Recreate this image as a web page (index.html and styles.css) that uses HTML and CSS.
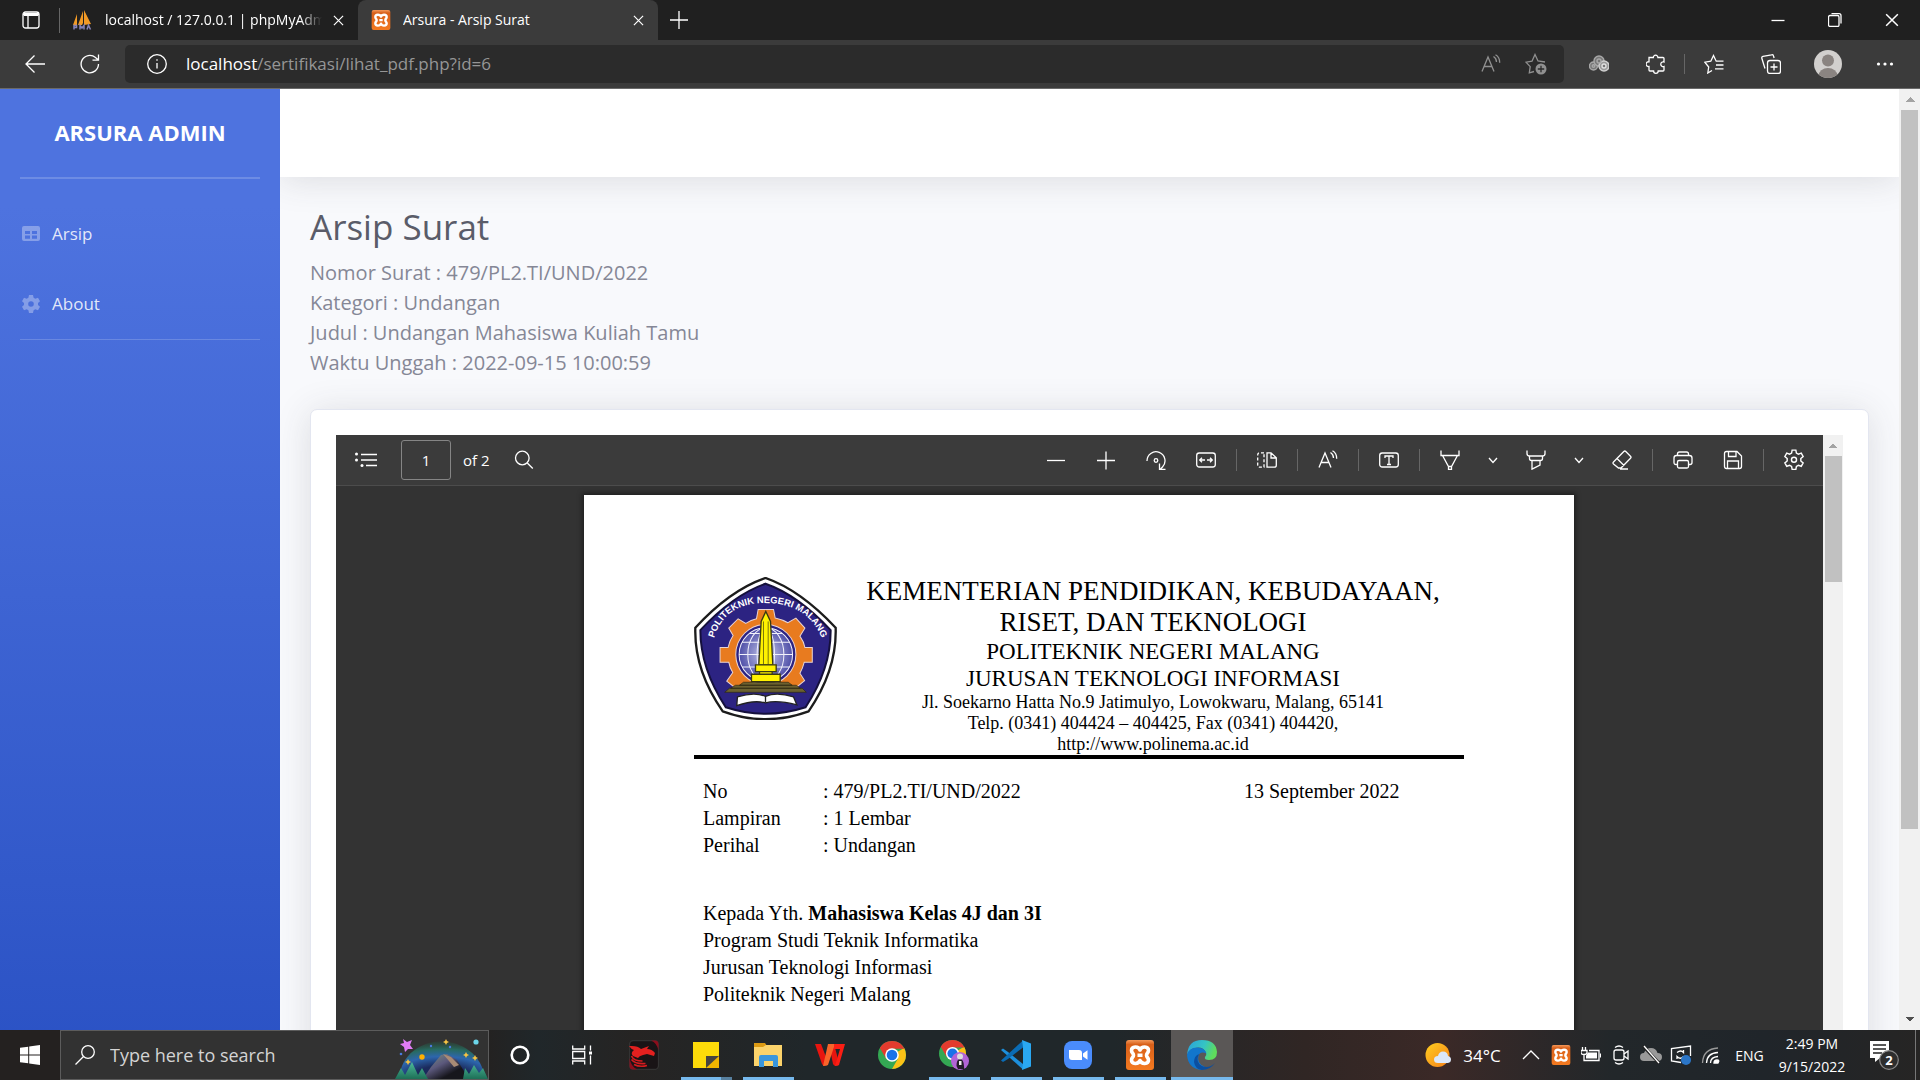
FILE: index.html
```html
<!DOCTYPE html>
<html lang="id">
<head>
<meta charset="utf-8">
<meta name="viewport" content="width=device-width, initial-scale=1">
<title>Arsura - Arsip Surat</title>
<link rel="stylesheet" href="styles.css">
</head>
<body>
<svg class="defs" aria-hidden="true">
  <defs>
    <linearGradient id="xg" x1="0" y1="0" x2="0" y2="1"><stop offset="0" stop-color="#f49a5c"/><stop offset=".15" stop-color="#d8601a"/><stop offset="1" stop-color="#f47a20"/></linearGradient>
    <symbol id="xampp" viewBox="0 0 30 30">
      <rect x="1" y="0" width="28" height="30" rx="3" fill="url(#xg)"/>
      <path d="M15 10C13.500 6 6.500 6 6.500 10.500C6.500 13 8.500 13 8.500 15.200S6.500 17.500 6.500 20C6.500 24.500 13.500 24.500 15 20.500C16.500 24.500 23.500 24.500 23.500 20C23.500 17.500 21.500 17.500 21.500 15.200S23.500 13 23.500 10.500C23.500 6 16.500 6 15 10ZM12.500 15.200h5" fill="none" stroke="#fff" stroke-width="3.600" stroke-linejoin="round"/>
    </symbol>
    <symbol id="chrome" viewBox="0 0 28 28">
      <circle cx="14" cy="14" r="14" fill="#34a853"/>
      <path d="M14 14 26.120 7A14 14 0 0 1 14 28L20 17.500Z" fill="#fbc116"/>
      <path d="M14 7.700H26.500A14 14 0 0 0 1.880 7L8 17.500Z" fill="#e33b2e"/>
      <circle cx="14" cy="14" r="6.800" fill="#fff"/><circle cx="14" cy="14" r="5.300" fill="#1a73e8"/>
    </symbol>
    <symbol id="readaloud" viewBox="0 0 20 20">
      <path d="M1 17.500 7 3l6 14.500M3 12.500h8M12.500 2.500c2 1.300 3 3.300 3 5.500M14.500.800c2.800 1.600 4.300 4.500 4.200 8"/>
    </symbol>
    <symbol id="chev" viewBox="0 0 12 12"><path d="m2 4 4 4.500L10 4"/></symbol>
    <symbol id="x" viewBox="0 0 12 12"><path d="m1 1 10 10M11 1 1 11"/></symbol>
  </defs>
</svg>

<header class="browser">
  <div class="tabs">
    <button class="icon-btn workspaces" aria-label="Tab actions"><svg class="i18" viewBox="0 0 18 18"><rect x="1" y="1" width="16" height="16" rx="2.500"/><path d="M1 3.500h16M6 5v12"/><path d="M2 2h14v3H2Z" class="fill" stroke="none"/></svg></button>
    <div class="tab">
      <svg class="fav plain" viewBox="0 0 20 20"><path d="M0 15 4 4v11ZM5 15 10 1v12l-1 2ZM11 15V0l7 14Z" fill="#f29a26"/><path d="M1 19.500V15.500h2.500v2H1M7 19.500v-4l2 2.500 2-2.500v4M14 19.500l1.500-4.200 2 4.200" fill="none" stroke="#8583b8" stroke-width="1.500"/></svg>
      <span class="tab-title fade">localhost / 127.0.0.1 | phpMyAdmin</span>
      <button class="icon-btn close" aria-label="Close tab"><svg class="i11"><use href="#x"/></svg></button>
    </div>
    <div class="tab active">
      <svg class="fav plain"><use href="#xampp"/></svg>
      <span class="tab-title">Arsura - Arsip Surat</span>
      <button class="icon-btn close" aria-label="Close tab"><svg class="i11"><use href="#x"/></svg></button>
    </div>
    <button class="icon-btn newtab" aria-label="New tab"><svg class="i18" viewBox="0 0 18 18"><path d="M9 0v18M0 9h18"/></svg></button>
    <div class="win">
      <button class="icon-btn" aria-label="Minimize"><svg class="i14" viewBox="0 0 14 14"><path d="M.500 7.500h13"/></svg></button>
      <button class="icon-btn" aria-label="Restore"><svg class="i14" viewBox="0 0 14 14"><rect x=".500" y="2.500" width="10.500" height="11" rx="1.500"/><path d="M3.500.700h7.500q2 0 2 2v7.800"/></svg></button>
      <button class="icon-btn" aria-label="Close"><svg class="i14" viewBox="0 0 12 12"><use href="#x"/></svg></button>
    </div>
  </div>
  <div class="toolbar">
    <button class="icon-btn nav" aria-label="Back"><svg class="i20" viewBox="0 0 20 20"><path d="M20 10H1M9.500 1.500 1 10l8.500 8.500"/></svg></button>
    <button class="icon-btn nav reload" aria-label="Refresh"><svg class="i20" viewBox="0 0 20 20"><path d="M18.500 10a8.700 8.700 0 1 1-3-6.500L18 5.800M18.500.500v5.700h-6"/></svg></button>
    <div class="address">
      <svg class="i20 info" viewBox="0 0 20 20"><circle cx="10" cy="10" r="9.300"/><path d="M10 9v5.500M10 5.200v1.600"/></svg>
      <div class="url"><b>localhost</b>/sertifikasi/lihat_pdf.php?id=6</div>
      <button class="icon-btn dim" aria-label="Read aloud"><svg class="i20"><use href="#readaloud"/></svg></button>
      <button class="icon-btn dim" aria-label="Add to favorites"><svg class="i22" viewBox="0 0 22 22"><path d="M9 18.500 4.300 19.800l.900-6.200L1 9.200l6-1L10 1.500l3 6.500 7 1"/><circle cx="16" cy="16" r="5.500" class="fill" stroke="none"/><path d="M16 12.800v6.400M12.800 16h6.400" stroke="#2b2b2b"/></svg></button>
    </div>
    <div class="tools">
      <button class="icon-btn" aria-label="Extension"><svg class="i20 plain" viewBox="0 0 20 20"><g stroke="#a8a8a8" stroke-width="1.400" fill="#777"><circle cx="4.500" cy="12" r="4"/><circle cx="10" cy="7" r="5"/><circle cx="15" cy="12" r="5" fill="#999" stroke="#d0d0d0"/><circle cx="4.500" cy="12" r="1.300"/><circle cx="10" cy="7" r="2"/><circle cx="15" cy="12" r="2" stroke="#e0e0e0"/></g></svg></button>
      <button class="icon-btn" aria-label="Extensions"><svg class="i20" viewBox="0 0 20 20"><path d="M3 3.500h4.300a2.300 2.300 0 1 1 4.600 0H17a1 1 0 0 1 1 1V8a2.400 2.400 0 1 0 0 4.500v3.500a1 1 0 0 1-1 1h-4.800a2.300 2.300 0 1 1-4.600 0H4a1 1 0 0 1-1-1v-3.500a2.400 2.400 0 1 1 0-4.700Z"/></svg></button>
      <span class="sep"></span>
      <button class="icon-btn" aria-label="Favorites"><svg class="i20" viewBox="0 0 20 20"><path d="M8 16.500 3.800 19l.900-6L.800 8.200l6-1L9.500 1.500l2.700 5.700h7.300M12 11h7.500M11 14.800h8.500"/></svg></button>
      <button class="icon-btn" aria-label="Collections"><svg class="i20" viewBox="0 0 20 20"><rect x="6.500" y="6.500" width="13" height="13" rx="2.500"/><path d="M13 9.500v7M9.500 13h7M4 14.500 .900 4.500q-.500-1.700 1-2.100L10.500.800q1.600-.400 2 1.200l.600 2"/></svg></button>
      <button class="icon-btn" aria-label="Profile"><svg class="i28 plain" viewBox="0 0 28 28"><defs><clipPath id="av"><circle cx="14" cy="14" r="14"/></clipPath></defs><g clip-path="url(#av)"><rect width="28" height="28" fill="#d2d0ce"/><circle cx="14" cy="10.500" r="6" fill="#8a8481"/><ellipse cx="14" cy="26" rx="9.500" ry="8" fill="#8a8481"/></g></svg></button>
      <button class="icon-btn" aria-label="Settings and more"><svg class="i18 plain" viewBox="0 0 18 18"><g fill="#fff"><circle cx="2.500" cy="9" r="1.600"/><circle cx="9" cy="9" r="1.600"/><circle cx="15.500" cy="9" r="1.600"/></g></svg></button>
    </div>
  </div>
</header>

<div class="page">
  <nav class="sidebar">
    <a class="brand" href="#">ARSURA ADMIN</a>
    <hr class="thick">
    <a class="nav-link" href="#"><svg viewBox="0 0 18 18"><path fill-rule="evenodd" d="M2 1h14q2 0 2 2v11q0 2-2 2H2q-2 0-2-2V3q0-2 2-2Zm1 5v3h5V6Zm7 0v3h5V6ZM3 10.500v3.300h5v-3.300Zm7 0v3.300h5v-3.300Z"/></svg><span>Arsip</span></a>
    <a class="nav-link" href="#"><svg viewBox="0 0 18 18"><path fill-rule="evenodd" d="M7 0h4l.600 2.700 1.700 1 2.700-.900 2 3.400L16 8v2l2 1.800-2 3.400-2.700-.900-1.700 1L11 18H7l-.600-2.700-1.700-1-2.700.900-2-3.400L2 10V8L0 6.200l2-3.400 2.700.900 1.700-1ZM9 6.200a2.800 2.800 0 1 0 0 5.600 2.800 2.800 0 0 0 0-5.600Z"/></svg><span>About</span></a>
    <hr>
  </nav>

  <main class="main">
    <div class="topbar"></div>
    <div class="content">
      <h1>Arsip Surat</h1>
      <p class="info-lines">Nomor Surat : 479/PL2.TI/UND/2022<br>Kategori : Undangan<br>Judul : Undangan Mahasiswa Kuliah Tamu<br>Waktu Unggah : 2022-09-15 10:00:59</p>
      <section class="card">
        <div class="viewer">
          <div class="pdf">
            <div class="pdf-bar">
              <button class="icon-btn toc" aria-label="Table of contents"><svg class="i22" viewBox="0 0 22 18"><path d="M6 3.500h16M6 9h16M11 14.500h11"/><g class="fill" stroke="none"><circle cx="1.500" cy="3" r="1.500"/><circle cx="1.500" cy="9" r="1.500"/><circle cx="7" cy="14.500" r="1.500"/></g></svg></button>
              <input class="page-no" type="text" value="1" aria-label="Page number">
              <span class="of">of 2</span>
              <button class="icon-btn" aria-label="Search"><svg class="i20" viewBox="0 0 20 20"><circle cx="8.300" cy="8" r="6.800"/><path d="m13.300 13 5.500 5.500"/></svg></button>
              <div class="pdf-tools">
                <button class="icon-btn" aria-label="Zoom out"><svg class="i20" viewBox="0 0 20 20"><path d="M1 10.500h18"/></svg></button>
                <button class="icon-btn" aria-label="Zoom in"><svg class="i20" viewBox="0 0 20 20"><path d="M1 10.500h18M10 1.500v18"/></svg></button>
                <button class="icon-btn" aria-label="Rotate"><svg class="i20" viewBox="0 0 20 20"><path d="M1 11a9 9 0 1 1 15.500 6l-2 2M13.500 13.500v6h6"/><circle cx="10" cy="10.500" r="1.800"/></svg></button>
                <button class="icon-btn" aria-label="Fit to width"><svg class="i20" viewBox="0 0 20 20"><rect x=".700" y="3" width="18.600" height="14" rx="2.500"/><path d="M9 10H4M6 7.700 3.700 10 6 12.300M11 10h5M14 7.700l2.300 2.300-2.300 2.300"/></svg></button>
                <span class="sep"></span>
                <button class="icon-btn" aria-label="Page view"><svg class="i20" viewBox="0 0 20 20"><path d="M10 2.800h4l5.300 5v7.400q0 2-2 2H10ZM14 3v5h5"/><path d="M7 2.800H3q-2.300 0-2.300 2.300v9.800q0 2.300 2.300 2.300h4V2.800" stroke-dasharray="3 2"/></svg></button>
                <span class="sep"></span>
                <button class="icon-btn" aria-label="Read aloud"><svg class="i20"><use href="#readaloud"/></svg></button>
                <span class="sep"></span>
                <button class="icon-btn" aria-label="Add text"><svg class="i20" viewBox="0 0 20 20"><rect x=".700" y="3" width="18.600" height="14" rx="2.500"/><path d="M6 8V6h8v2M10 6v8.500M8 14.500h4"/></svg></button>
                <span class="sep"></span>
                <button class="icon-btn" aria-label="Draw"><svg class="i20" viewBox="0 0 20 20"><path d="M1 .500V5.500h18V.500M2.500 5.500l6 11h3l6-11M8.500 16v3.300h3V16"/></svg></button>
                <button class="icon-btn narrow" aria-label="Draw options"><svg class="i12"><use href="#chev"/></svg></button>
                <button class="icon-btn" aria-label="Highlight"><svg class="i20" viewBox="0 0 20 20"><path d="M1 .500v3q0 2.500 2.500 2.500h13Q19 6 19 3.500v-3M3.500 6v2.500q0 2 2 2h9q2 0 2-2V6M6 10.500v8.700l8-4v-4.700"/></svg></button>
                <button class="icon-btn narrow" aria-label="Highlight options"><svg class="i12"><use href="#chev"/></svg></button>
                <button class="icon-btn" aria-label="Erase"><svg class="i20" viewBox="0 0 20 20"><path d="M1.500 12 11.800 1.500q1-1 2 0l4.700 4.700q1 1 0 2L9 18H6.500l-5-4q-1-1 0-2ZM5 8.500l7 7M8 19h8"/></svg></button>
                <span class="sep"></span>
                <button class="icon-btn" aria-label="Print"><svg class="i20" viewBox="0 0 20 20"><path d="M4.500 14.500H3q-2 0-2-2V8q0-2.500 2.500-2.500h13Q19 5.500 19 8v4.500q0 2-2 2h-1.500M4.500 5.500V4q0-2 2-2h7q2 0 2 2v1.500"/><rect x="4.500" y="10.500" width="11" height="7.500" rx="1.500"/></svg></button>
                <button class="icon-btn" aria-label="Save"><svg class="i20" viewBox="0 0 20 20"><path d="M3.500 1.500H14L18.500 6v10.500q0 2-2 2h-13q-2 0-2-2v-13q0-2 2-2ZM5.500 1.500v5h7.500v-5M4.500 18.500V11h11v7.500"/></svg></button>
                <span class="sep"></span>
                <button class="icon-btn" aria-label="Settings"><svg class="i22" viewBox="0 0 20 20"><path d="M8.300 1h3.400l.500 2.700 1.800 1 2.600-.900 1.700 3L16.200 8.600v2.300l2.100 1.800-1.700 3-2.600-.900-1.800 1-.500 2.700H8.300l-.500-2.700-1.800-1-2.600.900-1.700-3 2.100-1.800V8.600L1.700 6.800l1.700-3 2.600.900 1.800-1Z"/><circle cx="10" cy="9.800" r="2.300"/></svg></button>
              </div>
            </div>
            <div class="canvas">
              <article class="sheet">
                <header class="letterhead">
                  <svg class="crest" viewBox="42 51 428 428" role="img" aria-label="Politeknik Negeri Malang">
                    <defs>
                      <path id="arc" d="M98 250C120 150 190 127 262 129S402 160 430 250"/>
                      <radialGradient id="globe"><stop offset="0" stop-color="#c9cdec"/><stop offset="1" stop-color="#4f4fa8"/></radialGradient>
                    </defs>
                    <path d="M256 54 Q360 90 466 203 Q470 330 385 453 Q256 500 128 453 Q42 330 46 203 Q150 90 256 54Z" fill="#fff" stroke="#1c1c1c" stroke-width="7"/>
                    <path d="M256 71 Q352 104 451 210 Q452 325 376 441 Q256 480 137 441 Q61 325 61 210 Q160 104 256 71Z" fill="#2c2382" stroke="#15103c" stroke-width="6"/>
                    <g fill="#e87b1f" stroke="#e8d4d4" stroke-width="3">
                      <path d="M234 148h46l5 26q22 5 38 14l24-14 27 30-15 24q12 17 15 34h22v44h-24q-4 17-13 33l14 22-27 22H166l-26-20 18-26q-9-14-12-31h-26v-44h24q4-20 15-36l-13-22 28-28 23 14q16-10 32-14Z"/>
                    </g>
                    <circle cx="257" cy="283" r="90" fill="#2c2382" stroke="#e8d4d4" stroke-width="3"/>
                    <circle cx="257" cy="283" r="80" fill="url(#globe)"/>
                    <g fill="none" stroke="#f2f2fb" stroke-width="3"><circle cx="257" cy="283" r="80"/><ellipse cx="257" cy="283" rx="54" ry="80"/><ellipse cx="257" cy="283" rx="26" ry="80"/><path d="M177 283h160M186 246h142M186 320h142M208 220h98"/></g>
                    <g fill="#fff200" stroke="#3b3a12" stroke-width="4"><path d="M257 154l14 30 7 130h-42l7-130Z"/><path d="M250 184v130M264 184v130" stroke-width="2"/><path d="M226 314h62v20h-62ZM214 342h86v22h-86ZM238 334h38v8h-38Z"/></g>
                    <path d="M190 366h134l12 9H178ZM166 375h182l12 9H152ZM148 384h218l12 12H134Z" fill="#6b6130" stroke="#2c2710" stroke-width="2"/>
                    <path d="M172 410q50-16 84-2q34-14 84 2l10 24q-60-16-94-6-34-10-86 8Z" fill="#fff" stroke="#222" stroke-width="4"/><path d="M256 408v18" stroke="#222" stroke-width="4"/>
                    <text class="crest-text"><textPath href="#arc" startOffset="50%">POLITEKNIK NEGERI MALANG</textPath></text>
                  </svg>
                  <div class="org">
                    <p class="l1">KEMENTERIAN PENDIDIKAN, KEBUDAYAAN,<br>RISET, DAN TEKNOLOGI</p>
                    <p class="l2">POLITEKNIK NEGERI MALANG<br>JURUSAN TEKNOLOGI INFORMASI</p>
                    <p class="l3">Jl. Soekarno Hatta No.9 Jatimulyo, Lowokwaru, Malang, 65141<br>Telp. (0341) 404424 – 404425, Fax (0341) 404420,<br>http://www.polinema.ac.id</p>
                  </div>
                </header>
                <div class="meta">
                  <table>
                    <tr><th scope="row">No</th><td>: 479/PL2.TI/UND/2022</td></tr>
                    <tr><th scope="row">Lampiran</th><td>: 1 Lembar</td></tr>
                    <tr><th scope="row">Perihal</th><td>: Undangan</td></tr>
                  </table>
                  <time datetime="2022-09-13">13 September 2022</time>
                </div>
                <p class="to">Kepada Yth. <b>Mahasiswa Kelas 4J dan 3I</b><br>Program Studi Teknik Informatika<br>Jurusan Teknologi Informasi<br>Politeknik Negeri Malang</p>
              </article>
            </div>
          </div>
          <div class="scroll inner"><span class="arrow up"></span><span class="thumb"></span></div>
        </div>
      </section>
    </div>
  </main>
  <div class="scroll outer"><span class="arrow up"></span><span class="thumb"></span><span class="arrow down"></span></div>
</div>

<footer class="taskbar">
  <button class="start" aria-label="Start"><svg class="i20 plain" viewBox="0 0 20 20"><path d="M0 2.800 8.200 1.700v7.800H0ZM9.200 1.500 20 0v9.500H9.200ZM0 10.500h8.200v7.800L0 17.200ZM9.200 10.500H20V20L9.200 18.500Z" fill="#fff"/></svg></button>
  <div class="search">
    <svg class="i20" viewBox="0 0 20 20"><circle cx="13" cy="7" r="6.300"/><path d="M8.500 11.500.500 19.500"/></svg>
    <input type="text" placeholder="Type here to search" aria-label="Search">
    <svg class="art plain" viewBox="0 0 93 42">
      <defs>
        <radialGradient id="aur" cx=".5" cy="1" r="1"><stop offset=".35" stop-color="#1b2a5c"/><stop offset=".6" stop-color="#2d66ad"/><stop offset=".8" stop-color="#276a60"/><stop offset="1" stop-color="#27533f" stop-opacity=".3"/></radialGradient>
        <linearGradient id="rock" x1="0" y1="0" x2="1" y2="1"><stop offset="0" stop-color="#7d9a80"/><stop offset=".4" stop-color="#5b587c"/><stop offset=".7" stop-color="#16161c"/></linearGradient>
        <linearGradient id="tree" x1="0" y1="0" x2="0" y2="1"><stop offset="0" stop-color="#4dbb9b"/><stop offset="1" stop-color="#1d6f56"/></linearGradient>
      </defs>
      <path d="M4 42C8-8 84-8 90 42Z" fill="url(#aur)"/>
      <path d="M28 42 36 30 46 18l6-1 10 6 12 19Z" fill="url(#rock)"/><path d="m48 17 8 3 8 8-5 2-5-6Z" fill="#a98b75"/>
      <path d="M0 42 6 31l4 7 7-13 6 13 4-7 6 11ZM68 42l2-11 4 6 5-9 5 8 4-5 5 11Z" fill="url(#tree)"/>
      <path d="m8 2 4 3 5-2-2 5 3 4-5 0-3 3-1-5-4-3 4-1Z" fill="#e27cf5"/>
      <circle cx="81" cy="5" r="2.600" fill="#6cd6ea"/><circle cx="27" cy="20" r="2.700" fill="#ffb000"/>
      <path d="m51 2 1 2 2 1-2 1-1 2-1-2-2-1 2-1ZM71 15l1 2 2 1-2 1-1 2-1-2-2-1 2-1ZM13 22l1 2 2 1-2 1-1 2-1-2-2-1 2-1ZM80 18l1 2 2 1-2 1-1 2-1-2-2-1 2-1Z" fill="#f6c443"/>
      <circle cx="6" cy="17" r="1.300" fill="#4a78e0"/><circle cx="36" cy="9" r="1.200" fill="#4a78e0"/><circle cx="55" cy="10" r="1.200" fill="#4a78e0"/>
    </svg>
  </div>
  <div class="apps">
    <button aria-label="Cortana"><svg class="i20 plain" viewBox="0 0 20 20"><circle cx="10" cy="10" r="8.300" fill="none" stroke="#fff" stroke-width="2.600"/></svg></button>
    <button aria-label="Task view"><svg class="i20" viewBox="0 0 20 20"><path d="M.700.500V4h12V.500M.700 19.500V16h12v3.500M.700 6.500h12v7h-12ZM18.500.500v5M18.500 10.500v9"/><rect x="17" y="6.500" width="3" height="3" class="fill" stroke="none"/></svg></button>
    <button aria-label="Dragon Center"><svg class="i30 plain" viewBox="0 0 30 30"><rect x=".500" y=".500" width="29" height="29" rx="4" fill="#191416" stroke="#333"/><path d="M22 .500h4q3.500 0 3.500 4v6Q28 3 22 .500ZM.500 18v8q0 3.500 4 3.500h4Q2 27 .500 18Z" fill="#8d0d1c"/><path d="M3 6q6 0 9 3l8-3-2 3q5 0 8 4l-1 3-7-2-4 1q-4 1-5 3l-5-2q-3-3 1-6-3-1-5-4Z" fill="#e3201f"/><path d="M2.500 16q2 5 11 5M2.500 19.500q4 5 14 4M5 24.500q6 3 13 1" fill="none" stroke="#d41c1f" stroke-width="1.600"/></svg></button>
    <button class="run more" aria-label="Sticky Notes"><svg class="i28 plain" viewBox="0 0 28 28"><path d="M1 1h26v26H1Z" fill="#fddb09"/><path d="M27 14v13H14Z" fill="#f0b400"/><path d="M14 27V15h13Z" fill="#46443f"/></svg></button>
    <button class="run" aria-label="File Explorer"><svg class="i28 plain" viewBox="0 0 28 28"><path d="M0 2h11l2 3v5H0Z" fill="#dc9a13"/><path d="M0 6h9l3-2h16v21H0Z" fill="#fbd36b"/><path d="M5 26V16q0-2 2-2h15q2 0 2 2v10h-5v-6h-9v6Z" fill="#3a96dc"/></svg></button>
    <button aria-label="WPS Office"><svg class="i30 plain" viewBox="0 0 30 30"><path d="M0 4h6l5 13-1 9q-2 0-3-2Z" fill="#e8150f"/><path d="M14 4h5l4 15-2 7q-2 0-3-2Z" fill="#e8150f"/><path d="M13 4h7l-7 21q-1 1-5 1Z" fill="#f8642a"/><path d="M19 9V4h11l-6 21q-1 1-4 1l5-17Z" fill="#fb1e14"/></svg></button>
    <button aria-label="Chrome"><svg class="i28 plain"><use href="#chrome"/></svg></button>
    <button class="run" aria-label="Chrome profile"><svg class="i30 plain" viewBox="0 0 30 30"><use href="#chrome" width="27" height="27"/><circle cx="21" cy="21" r="9" fill="#b264d6"/><path d="M17.500 26q0-7 3.500-7t4 7-1 3h-5Z" fill="#241c2a"/><circle cx="21" cy="16.500" r="3" fill="#ddd"/><path d="M20 21h2.500v4H20Z" fill="#eee"/></svg></button>
    <button class="run" aria-label="Visual Studio Code"><svg class="i30 plain" viewBox="0 0 30 30"><path d="M0 10 2 8.500l5 3.500 15 12v5.500Z" fill="#1d8fdc"/><path d="M22 .500v7L7 19l-5 3L0 20.500Z" fill="#0a6cb5"/><path d="M21 0l9 3.500v23L21 30l1-6V7Z" fill="#2aa8f2"/></svg></button>
    <button class="run" aria-label="Zoom"><svg class="i28 plain" viewBox="0 0 28 28"><rect width="28" height="28" rx="8" fill="#4a8cfc"/><path d="M5 9h10q3 0 3 3v7H8q-3 0-3-3ZM19 12.500l4.500-3.200v9.400L19 15.500Z" fill="#fff"/></svg></button>
    <button class="run" aria-label="XAMPP"><svg class="i30 plain"><use href="#xampp"/></svg></button>
    <button class="run current" aria-label="Microsoft Edge"><svg class="i30 plain" viewBox="0 0 30 30"><defs><linearGradient id="eg" x1="0" y1="0" x2="1" y2=".3"><stop offset="0" stop-color="#2aa0dc"/><stop offset=".6" stop-color="#35c4c4"/><stop offset="1" stop-color="#5fdc5c"/></linearGradient></defs><path d="M0 15Q1 0 15 0q14 0 15 12 0 8-8 8-5 0-4-3 2-2 1-4-3-7-11-5-6 1-8 7Z" fill="url(#eg)"/><path d="M0 15Q2 7.500 10 7.500q8 0 9.500 6-6-3-8 2-2 8 6 11-2 3.500-4 3.500Q1 28 0 15Z" fill="#1276cc"/><path d="M12 14q-4 8 3 12 7 3 13-3-5 7-13 7-7-1-8-8 0-6 5-8Z" fill="#0c4fa0"/></svg></button>
  </div>
  <div class="tray">
    <button class="weather"><svg class="i26 plain" viewBox="0 0 26 26"><defs><linearGradient id="sun" x1="0" y1="0" x2="1" y2="1"><stop offset="0" stop-color="#ffce1f"/><stop offset="1" stop-color="#f5801a"/></linearGradient></defs><circle cx="12.500" cy="13" r="12" fill="url(#sun)"/><path d="M13 21q-4 0-4-3.500t4-3.500q1-4.500 5-4.500 4.500 0 5 4.500 3 .500 3 3.500t-3 3.500Z" fill="#dbe8fa"/></svg>34°C</button>
    <button aria-label="Show hidden icons"><svg class="i18" viewBox="0 0 18 18"><path d="m1 13 8-8 8 8"/></svg></button>
    <button aria-label="XAMPP control"><svg class="i20 plain"><use href="#xampp"/></svg></button>
    <button aria-label="Battery"><svg class="i20" viewBox="0 0 20 20"><path d="M1.500 2v3M4.500 2v3M0 5.500h6v2q0 2-3 2t-3-2ZM3 9v6.500h15v-10H8"/><path d="M7 7.500h9v6H5v-3Z" class="fill" stroke="none"/><path d="M19.500 8.500v4"/></svg></button>
    <button aria-label="Meet now"><svg class="i20" viewBox="0 0 20 20"><rect x="3" y="5" width="10" height="10" rx="2"/><path d="m13 9 4-3v8l-4-3M4 2.500q4-3 8 0M4 17.500q4 3 8 0"/></svg></button>
    <button aria-label="OneDrive"><svg class="i22 plain" viewBox="0 0 22 22"><path d="M4 17q-4 0-4-4t4-4q2-5 7-5t6.500 5q4.500 0 4.500 4t-4 4Z" fill="#999"/><path d="m3 2 16 17" stroke="#222" stroke-width="3"/><path d="m4 2 15 17" stroke="#fff" stroke-width="1.300"/></svg></button>
    <button aria-label="Windows Update"><svg class="i22" viewBox="0 0 22 22"><path d="M11 18.500 1.500 17V4.500L20.500 2v10M7 8.500q4-3 6.500 0V6M13.500 12.500q-3 3.500-6.500 0V15"/><circle cx="16" cy="16" r="5" fill="#2b76c8" stroke="none"/></svg></button>
    <button aria-label="Network"><svg class="i20" viewBox="0 0 20 20"><path d="M1.500 18Q2 4 17 3" stroke="#999"/><path d="M5.500 18Q6 8 17 7.500M9.500 18q0-6 7.500-6.500"/><path d="M13 18q0-3 3-3t1 3Z" class="fill"/></svg></button>
    <button class="lang">ENG</button>
    <button class="clock"><span>2:49 PM</span><span>9/15/2022</span></button>
    <button class="notify" aria-label="Notifications"><svg class="i30 plain" viewBox="0 0 30 30"><path d="M1 1h19v17h-9l-5 4v-4H1Z" fill="#fff"/><path d="M4 5h13M4 9h13M4 13h9" stroke="#222" stroke-width="1.500"/><circle cx="20" cy="20" r="9.300" fill="#2e2e2e" stroke="#8b8b8b" stroke-width="1.200"/><text class="count" x="20" y="25">2</text></svg></button>
  </div>
</footer>
</body>
</html>
```
FILE: styles.css
```css
* { box-sizing: border-box; }

body {
  margin: 0;
  height: 100vh;
  display: grid;
  grid-template-rows: auto minmax(0, 1fr) auto;
  overflow: hidden;
  font-family: "Open Sans", "Noto Sans", sans-serif;
}

button {
  margin: 0;
  padding: 0;
  border: 0;
  background: none;
  color: inherit;
  font: inherit;
}

a { color: inherit; text-decoration: none; }
p, h1 { margin: 0; }

svg {
  display: block;
  flex: none;
  fill: none;
  stroke: currentColor;
  stroke-width: 1.3;
}
svg.plain { stroke: none; }
.fill { fill: currentColor; }
.defs { position: absolute; width: 0; height: 0; }

.i11 { width: 11px; height: 11px; }
.i12 { width: 12px; height: 12px; }
.i14 { width: 14px; height: 14px; }
.i18 { width: 18px; height: 18px; }
.i20 { width: 20px; height: 20px; }
.i22 { width: 22px; height: 22px; }
.i26 { width: 26px; height: 26px; }
.i28 { width: 28px; height: 28px; }
.i30 { width: 30px; height: 30px; }

.icon-btn { display: flex; align-items: center; justify-content: center; }
.sep { width: 1px; background: #666; }

/* Browser frame */
.browser { color: #fff; background: #3b3b3b; border-bottom: 1px solid #6a6a6a; }

.tabs { display: flex; height: 40px; background: #202020; }
.workspaces { width: 60px; padding-left: 2px; background: linear-gradient(#666, #666) right center / 1px 25px no-repeat; }
.tab { display: flex; align-items: center; width: 298px; padding: 0 9px 0 13px; font-size: 14px; }
.tab.active { width: 300px; background: #3b3b3b; border-radius: 8px 8px 0 0; }
.fav { width: 20px; height: 20px; }
.tab-title { flex: 1; min-width: 0; margin-left: 12px; padding-bottom: 2px; overflow: hidden; white-space: nowrap; }
.fade { -webkit-mask-image: linear-gradient(to right, #000 90%, transparent); mask-image: linear-gradient(to right, #000 90%, transparent); }
.close { width: 22px; height: 22px; margin-left: 5px; }
.newtab { width: 42px; }
.win { display: flex; margin-left: auto; }
.win .icon-btn { width: 57px; }

.toolbar { display: flex; align-items: center; height: 48px; padding-right: 7px; }
.nav { width: 70px; height: 40px; }
.reload { width: 40px; margin-right: 15px; }
.address { display: flex; align-items: center; flex: 1; height: 38px; padding: 0 6px 0 22px; border-radius: 5px; background: #2b2b2b; }
.url { flex: 1; margin-left: 19px; padding-bottom: 2px; font-size: 17px; color: #969696; white-space: nowrap; }
.url b { font-weight: 400; color: #fff; }
.dim { width: 45px; height: 38px; color: #909090; }
.tools { display: flex; align-items: center; margin-left: 6px; }
.tools .icon-btn { width: 57px; height: 40px; }
.tools .sep { height: 20px; }

/* Web page */
.page { display: flex; overflow: hidden; background: #f8f9fc; }

.sidebar {
  flex: none;
  width: 280px;
  height: 1178px;
  padding: 0 20px;
  color: #fff;
  background: linear-gradient(180deg, #4e73df 10%, #224abe 100%);
}
.brand { display: grid; place-items: center; height: 88px; padding-bottom: 2px; font-size: 22px; font-weight: 700; }
.sidebar hr { height: 1px; margin: 0; border: 0; background: rgba(255, 255, 255, .18); }
.sidebar hr.thick { height: 2px; margin-bottom: 20px; }
.nav-link { display: flex; align-items: center; gap: 12px; height: 70px; padding-left: 2px; font-size: 17px; color: rgba(255, 255, 255, .85); }
.nav-link span { padding-bottom: 2px; }
.nav-link svg { width: 18px; height: 18px; fill: rgba(255, 255, 255, .32); stroke: none; }

.main { flex: 1; min-width: 0; overflow: hidden; }
.topbar { height: 88px; background: #fff; box-shadow: 0 3px 35px rgba(58, 59, 69, .15); }
.content { padding: 29px 30px 0; }
h1 { font-size: 35px; line-height: 42px; font-weight: 400; color: #5a5c69; }
.info-lines { margin-top: 10px; font-size: 20px; line-height: 30px; color: #858796; }

.card {
  margin-top: 31px;
  padding: 25px;
  border: 1px solid #e3e6f0;
  border-radius: 7px;
  background: #fff;
  box-shadow: 0 3px 35px rgba(58, 59, 69, .15);
}
.viewer { display: flex; height: 770px; overflow: hidden; }

.scroll { display: flex; flex-direction: column; align-items: center; flex: none; background: #f1f1f1; }
.arrow { width: 10px; height: 21px; }
.up { background: conic-gradient(from 135deg at 50% 0, #a3a3a3 90deg, transparent 0) center / 10px 5px no-repeat; }
.down { margin-top: auto; background: conic-gradient(from -45deg at 50% 100%, #505050 90deg, transparent 0) center / 10px 5px no-repeat; }
.thumb { width: 17px; background: #c1c1c1; }
.outer { width: 21px; }
.outer .thumb { height: calc(80% - 34px); }
.inner { width: 20px; }
.inner .thumb { height: 126px; }

/* PDF viewer */
.pdf { display: flex; flex-direction: column; flex: 1; min-width: 0; background: #333; }
.pdf-bar { display: flex; align-items: center; flex: none; height: 51px; padding: 0 4px 0 5px; border-bottom: 1px solid #4c4c4c; background: #3b3b3b; color: #fff; }
.pdf-bar .icon-btn { width: 50px; height: 40px; }
.pdf-bar .narrow { width: 36px; }
.pdf-bar .sep { height: 22px; margin: 0 5px; }
.page-no { width: 50px; height: 40px; margin-left: 10px; padding: 0; border: 1px solid #858585; border-radius: 3px; background: #3b3b3b; color: #fff; font: inherit; font-size: 15px; text-align: center; }
.of { margin: 0 9px 0 12px; font-size: 15px; }
.pdf-tools { display: flex; align-items: center; margin-left: auto; }

.canvas { flex: 1; padding: 9px 0 0; }
.sheet {
  width: 990px;
  height: 1400px;
  margin-left: 248px;
  padding: 81px 110px;
  background: #fff;
  box-shadow: 0 0 5px 2px rgba(0, 0, 0, .4);
  color: #000;
  font: 20px/27px "Liberation Serif", "Times New Roman", serif;
}
.letterhead { display: flex; gap: 5px; border-bottom: 4px solid #000; }
.crest { width: 143px; height: 143px; margin-top: 1px; stroke: none; }
.crest-text { fill: #fff; font: bold 28px "Liberation Sans", Arial, sans-serif; text-anchor: middle; }
.org { flex: 1; text-align: center; }
.l1 { font-size: 27px; line-height: 31px; }
.l2 { font-size: 23px; line-height: 27px; }
.l3 { font-size: 18px; line-height: 21px; }
.meta { display: grid; grid-template-columns: 541px 1fr; margin-top: 19px; padding-left: 9px; }
.meta table { width: 100%; border-collapse: collapse; }
.meta th, .meta td { padding: 0; font-weight: 400; text-align: left; }
.meta th { width: 120px; }
.to { margin-top: 41px; padding-left: 9px; }

/* Taskbar */
.taskbar {
  display: flex;
  align-items: stretch;
  height: 50px;
  background: linear-gradient(90deg, #242120 0, #242120 25%, #20272a 28%, #262423 33%, #20272a 42%, #20272a 58%, #302624 68%, #3b2927 75%, #22272a 84%, #20252a 92%, #262524 100%);
  color: #fff;
}
.taskbar button { display: flex; align-items: center; justify-content: center; }
.start { width: 60px; }
.search { display: flex; align-items: center; width: 429px; padding-left: 14px; border: 1px solid #5c5c5c; background: #323232; }
.search input { flex: 1; min-width: 0; margin-left: 15px; padding: 0; border: 0; outline: 0; background: none; color: #d4d4d4; font: 18px "Open Sans", "Noto Sans", sans-serif; }
.search input::placeholder { color: #d4d4d4; opacity: 1; }
.art { align-self: flex-end; width: 93px; height: 42px; }
.apps { display: flex; }
.apps button { width: 62px; }
.run { background: linear-gradient(#76b9ed, #76b9ed) center bottom / 51px 3px no-repeat; }
.run.more { background: linear-gradient(90deg, #76b9ed 40px, #57809f 40px) center bottom / 51px 3px no-repeat; }
.run.current { background: linear-gradient(#76b9ed, #76b9ed) center bottom / 100% 3px no-repeat #5a5756; }

.tray { display: flex; margin-left: auto; padding-right: 4px; }
.tray button { width: 30px; }
.tray .weather { width: 92px; gap: 12px; margin-right: 7px; font-size: 17px; }
.tray .lang { width: 47px; font-size: 14px; }
.tray .clock { flex-direction: column; width: 87px; padding-right: 9px; font-size: 14px; line-height: 23px; }
.tray .notify { width: 56px; padding-right: 7px; border-right: 1px solid #777; }
.count { fill: #fff; font: bold 13px "Open Sans", sans-serif; text-anchor: middle; }
```
